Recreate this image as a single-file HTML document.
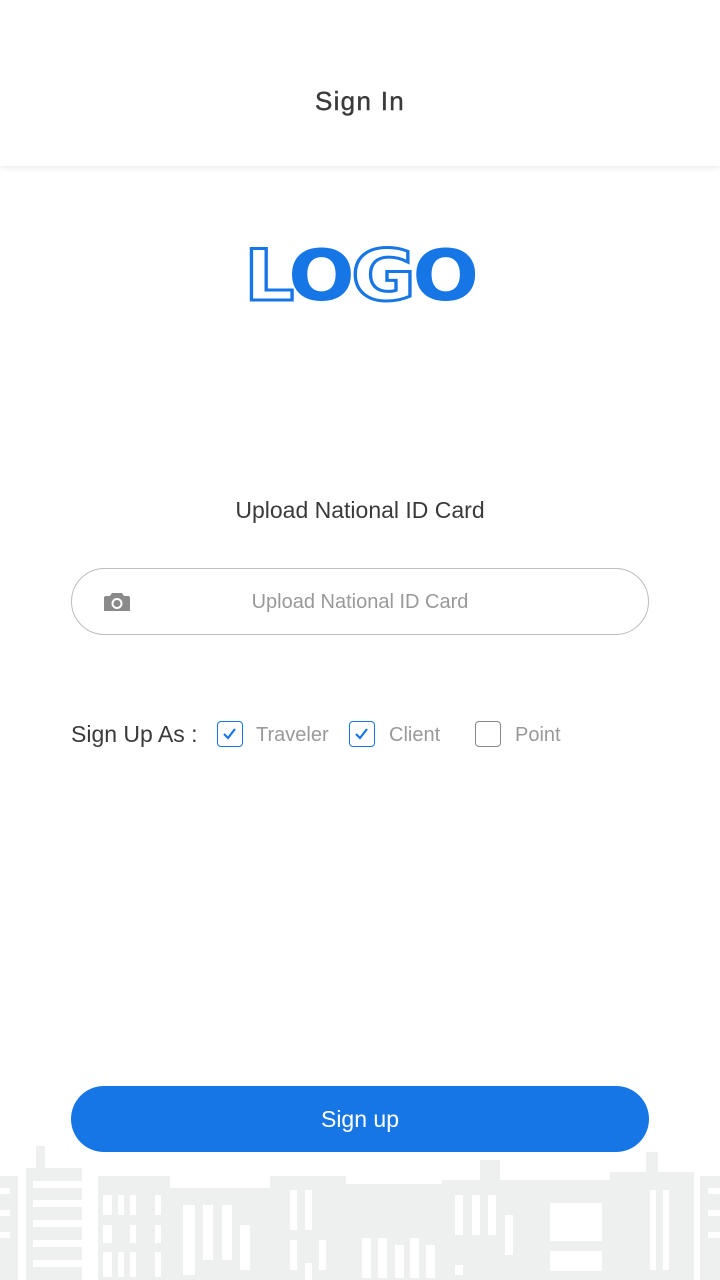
<!DOCTYPE html>
<html><head><meta charset="utf-8"><style>
body{margin:0;width:720px;height:1280px;background:#fff;position:relative;overflow:hidden;font-family:"Liberation Sans",sans-serif}
.hdr{position:absolute;left:0;top:0;width:720px;height:166px;background:#fff;box-shadow:0 2px 6px rgba(0,0,0,.08);z-index:3}
.hdr div{position:absolute;top:86px;width:720px;text-align:center;font-size:26px;color:#3a3a3a;letter-spacing:1.3px;-webkit-text-stroke:0.4px #3a3a3a}
.t{position:absolute;width:720px;text-align:center}
.field{position:absolute;left:71px;top:568px;width:576px;height:65px;border:1px solid #bdbdbd;border-radius:34px;z-index:2}
.cb{position:absolute;top:721px;width:26px;height:26px;border:1.5px solid #777;border-radius:4px;box-sizing:border-box}
.cb.on{border-color:#1776e5}
.lbl{position:absolute;top:724px;font-size:20px;color:#999}
.btn{position:absolute;left:71px;top:1086px;width:578px;height:66px;background:#1776e5;border-radius:33px;color:#fff;font-size:23px;text-align:center;line-height:66px;z-index:2}
</style></head><body>
<div class="hdr"><div>Sign In</div></div>
<div class="t" style="top:238px;font-family:'DejaVu Sans',sans-serif;font-weight:bold;font-size:70px;color:#1776e5;letter-spacing:-3px;line-height:76px;transform:scaleX(1.12)"><span style="color:#fff;-webkit-text-stroke:3px #1776e5">L</span>O<span style="color:#fff;-webkit-text-stroke:3px #1776e5">G</span>O</div>
<div class="t" style="top:497px;font-size:23px;color:#3a3a3a">Upload National ID Card</div>
<div class="field">
<svg style="position:absolute;left:32px;top:22px" width="26" height="22" viewBox="0 0 26 22"><path d="M8 2h10l2 3h4a2 2 0 0 1 2 2v13H0V7a2 2 0 0 1 2-2h4z" fill="#8a8a8a"/><circle cx="13" cy="12.5" r="5.5" fill="#fff"/><circle cx="13" cy="12.5" r="3.5" fill="#8a8a8a"/></svg>
<div style="position:absolute;width:576px;top:22px;text-align:center;font-size:20px;color:#999">Upload National ID Card</div>
</div>
<div style="position:absolute;left:71px;top:721px;font-size:23px;color:#3a3a3a">Sign Up As :</div>
<div class="cb on" style="left:217px"><svg width="23" height="23" viewBox="0 0 23 23"><path d="M6 12l4 4 7-9" fill="none" stroke="#1776e5" stroke-width="2.2"/></svg></div>
<div class="lbl" style="left:256px">Traveler</div>
<div class="cb on" style="left:349px"><svg width="23" height="23" viewBox="0 0 23 23"><path d="M6 12l4 4 7-9" fill="none" stroke="#1776e5" stroke-width="2.2"/></svg></div>
<div class="lbl" style="left:389px">Client</div>
<div class="cb" style="left:475px;border-color:#888"></div>
<div class="lbl" style="left:515px">Point</div>
<svg style="position:absolute;left:0;top:1120px" width="720" height="160" viewBox="0 1120 720 160">
<g fill="#eef0f0">
<rect x="0" y="1176" width="18" height="104"/>
<rect x="26" y="1168" width="56" height="112"/><rect x="36" y="1146" width="9" height="30"/>
<rect x="98" y="1176" width="72" height="104"/>
<rect x="170" y="1188" width="100" height="92"/>
<rect x="270" y="1176" width="76" height="104"/>
<rect x="346" y="1184" width="96" height="96"/>
<rect x="442" y="1180" width="100" height="100"/><rect x="480" y="1160" width="20" height="30"/>
<rect x="542" y="1180" width="68" height="100"/>
<rect x="610" y="1172" width="84" height="108"/><rect x="646" y="1152" width="12" height="30"/>
<rect x="700" y="1176" width="20" height="104"/>
</g>
<g fill="#fff">
<rect x="33" y="1181" width="49" height="7"/><rect x="33" y="1200" width="49" height="7"/><rect x="33" y="1220" width="49" height="7"/><rect x="33" y="1240" width="49" height="7"/><rect x="33" y="1260" width="49" height="7"/>
<rect x="0" y="1188" width="10" height="6"/><rect x="0" y="1210" width="10" height="6"/><rect x="0" y="1232" width="10" height="6"/>
<rect x="103" y="1195" width="9" height="20"/><rect x="118" y="1195" width="6" height="20"/><rect x="130" y="1195" width="6" height="20"/><rect x="155" y="1195" width="6" height="20"/>
<rect x="103" y="1225" width="9" height="18"/><rect x="130" y="1225" width="6" height="18"/><rect x="155" y="1225" width="6" height="18"/>
<rect x="103" y="1252" width="9" height="25"/><rect x="118" y="1252" width="6" height="25"/><rect x="130" y="1252" width="6" height="25"/><rect x="155" y="1252" width="6" height="25"/>
<rect x="183" y="1205" width="12" height="70"/><rect x="203" y="1205" width="10" height="55"/><rect x="222" y="1205" width="10" height="55"/><rect x="240" y="1225" width="10" height="45"/>
<rect x="290" y="1190" width="7" height="40"/><rect x="305" y="1190" width="7" height="40"/><rect x="290" y="1240" width="7" height="30"/><rect x="319" y="1240" width="7" height="30"/><rect x="305" y="1263" width="7" height="17"/>
<rect x="362" y="1238" width="9" height="40"/><rect x="378" y="1238" width="9" height="40"/><rect x="395" y="1245" width="9" height="33"/><rect x="410" y="1238" width="9" height="40"/><rect x="426" y="1245" width="9" height="33"/>
<rect x="455" y="1195" width="8" height="40"/><rect x="472" y="1195" width="8" height="40"/><rect x="488" y="1195" width="8" height="40"/><rect x="505" y="1215" width="8" height="40"/><rect x="455" y="1265" width="8" height="10"/>
<rect x="550" y="1203" width="52" height="38"/><rect x="550" y="1251" width="52" height="20"/>
<rect x="650" y="1190" width="6" height="80"/><rect x="663" y="1190" width="6" height="80"/>
<rect x="708" y="1188" width="12" height="6"/><rect x="708" y="1210" width="12" height="6"/><rect x="708" y="1232" width="12" height="6"/>
</g></svg>
<div class="btn">Sign up</div>
</body></html>
